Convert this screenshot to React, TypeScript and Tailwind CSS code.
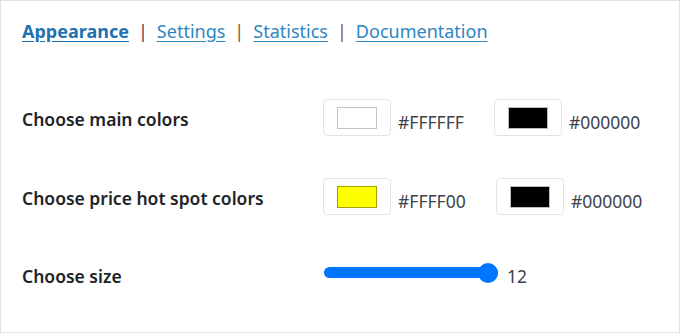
import React from "react";

const font = { fontFamily: '"Noto Sans", "Open Sans", sans-serif' };

function Swatch({ color, border }: { color: string; border: string }) {
  return (
    <div className="w-[68px] h-[37px] rounded-[4px] border border-[#e4e4e4] bg-white flex items-center justify-center">
      <div className={`w-[40px] h-[22px] border ${border}`} style={{ backgroundColor: color }} />
    </div>
  );
}

export default function App() {
  return (
    <div
      className="w-[680px] h-[333px] border border-[#e2e2e2] bg-white text-[#1d2327] overflow-hidden"
      style={font}
    >
      <nav className="flex items-center pl-[21px] pt-[17px] text-[18px] leading-[26px]">
        <a className="font-bold text-[#2271b1] underline underline-offset-[3px]">Appearance</a>
        <span className="mx-[9px] text-[#6a3050]">|</span>
        <a className="text-[#2e86c1] underline underline-offset-[3px]">Settings</a>
        <span className="mx-[9px] text-[#7a5a3c]">|</span>
        <a className="text-[#2e86c1] underline underline-offset-[3px]">Statistics</a>
        <span className="mx-[9px] text-[#7a5a3c]">|</span>
        <a className="text-[#2e86c1] underline underline-offset-[3px]">Documentation</a>
      </nav>

      <div className="pl-[21px] mt-[55px] flex flex-col">
        <div className="flex items-center h-[37px]">
          <div className="w-[301px] text-[17.5px] font-semibold pt-[3px]">Choose main colors</div>
          <Swatch color="#ffffff" border="border-[#c4c4c4]" />
          <span className="ml-[7px] w-[96px] text-[17.5px] text-[#3c434a] pt-[10px]">#FFFFFF</span>
          <Swatch color="#000000" border="border-[#bbbbbb]" />
          <span className="ml-[7px] text-[17.5px] text-[#3c434a] pt-[10px]">#000000</span>
        </div>

        <div className="flex items-center h-[37px] mt-[42px]">
          <div className="w-[301px] text-[17.5px] font-semibold pt-[3px]">Choose price hot spot colors</div>
          <Swatch color="#ffff00" border="border-[#a0a000]" />
          <span className="ml-[7px] w-[98px] text-[17.5px] text-[#3c434a] pt-[10px]">#FFFF00</span>
          <Swatch color="#000000" border="border-[#bbbbbb]" />
          <span className="ml-[7px] text-[17.5px] text-[#3c434a] pt-[10px]">#000000</span>
        </div>

        <div className="flex items-center h-[37px] mt-[39px]">
          <div className="w-[302px] text-[17.5px] font-semibold pt-[7px]">Choose size</div>
          <div className="relative w-[174px] h-[20px] flex items-center">
            <div className="w-full h-[11px] rounded-full bg-[#0075ff]" />
            <div className="absolute right-0 top-0 w-[20px] h-[20px] rounded-full bg-[#0075ff]" />
          </div>
          <span className="ml-[9px] text-[17.5px] text-[#3c434a] pt-[8px]">12</span>
        </div>
      </div>
    </div>
  );
}
